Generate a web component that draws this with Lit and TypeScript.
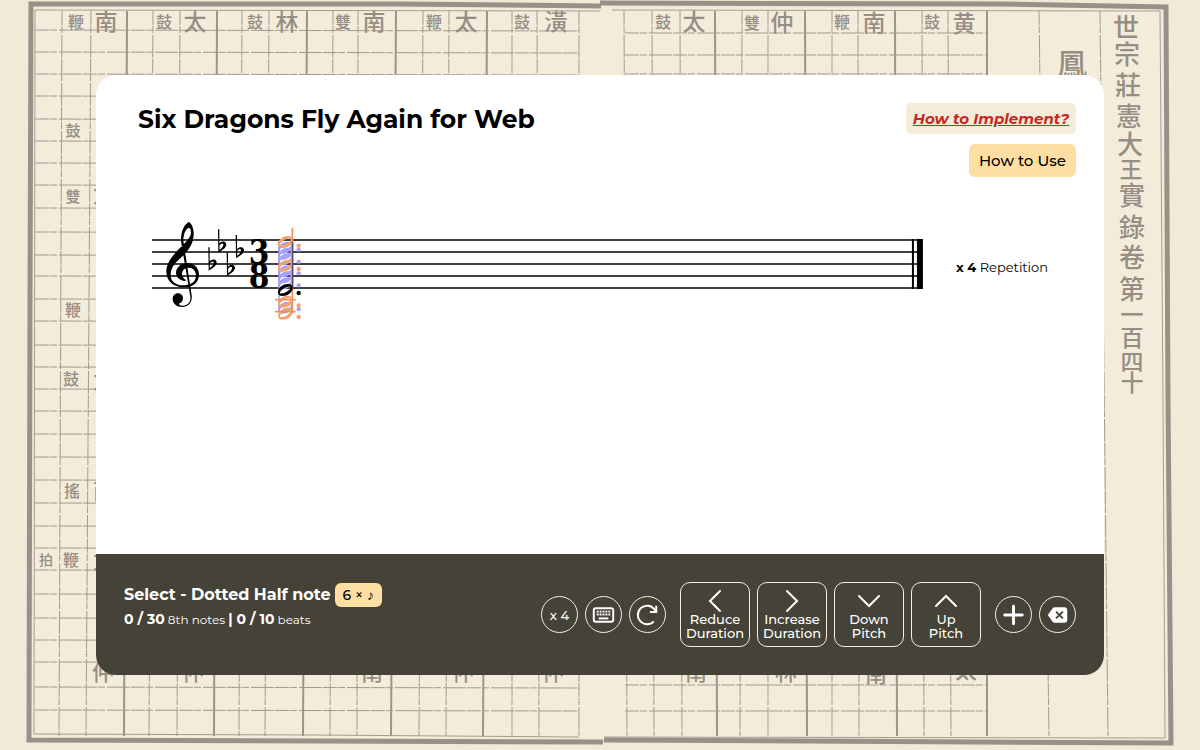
import { LitElement, html, css, svg } from "lit";
import { customElement } from "lit/decorators.js";
import { classMap } from "lit/directives/class-map.js";

// Ruled columns of the manuscript page: [x at the top, x at the bottom, heavy]
const COLUMNS: [number, number, boolean][] = [
  [62, 59, false], [91, 86, false], [127, 124, true], [153, 149, false], [180, 177, false],
  [217, 214, true], [242, 239, false], [269, 265, false], [307, 303, true], [333, 330, false],
  [358, 357, false], [396, 391, true], [423, 419, false], [449, 446, false], [487, 483, true],
  [512, 512, false], [537, 539, false], [579, 579, false], [624, 627, false], [652, 654, false],
  [680, 682, false], [715, 717, true], [742, 740, false], [768, 768, false], [805, 807, true],
  [832, 832, false], [858, 859, false], [895, 897, true], [922, 924, false], [948, 951, false],
  [987, 987, true], [1039, 1049, false], [1100, 1108, false],
];

const LEFT_ROWS = [
  30, 52, 74, 96, 119, 141, 163, 185, 208, 232, 255, 276, 299, 321, 345, 367, 389, 411,
  434, 457, 480, 503, 526, 548, 570, 594, 618, 640, 662, 687, 710,
];
const RIGHT_ROWS = [33, 55, 74, 685, 711];

// Brush characters: [glyph, centre x, baseline y, size]
const GLYPHS: [string, number, number, number][] = [
  ["南", 106, 30, 23], ["太", 195, 30, 23], ["林", 287, 30, 23], ["南", 374, 30, 23],
  ["太", 466, 30, 23], ["潢", 556, 30, 23], ["太", 694, 30, 23], ["仲", 782, 31, 23],
  ["南", 874, 31, 23], ["黄", 964, 32, 23],
  ["鞭", 76, 28, 16], ["鼓", 164, 28, 16], ["鼓", 255, 28, 16], ["雙", 343, 28, 16],
  ["鞭", 434, 28, 16], ["鼓", 522, 28, 16], ["鼓", 663, 28, 16], ["雙", 752, 29, 16],
  ["鞭", 842, 28, 16], ["鼓", 932, 28, 16],
  ["鼓", 73, 136, 15], ["雙", 73, 202, 15], ["鞭", 73, 316, 16], ["鼓", 71, 385, 16],
  ["搖", 72, 497, 16], ["鞭", 71, 566, 16], ["拍", 46, 565, 14],
  ["太", 104, 202, 22], ["太", 104, 388, 22], ["南", 104, 499, 22], ["太", 104, 568, 22],
  ["仲", 103, 680, 22], ["仲", 193, 680, 22], ["南", 372, 680, 22], ["仲", 463, 680, 22],
  ["仲", 553, 680, 22], ["南", 696, 680, 22], ["林", 786, 680, 22], ["南", 876, 682, 22],
  ["太", 966, 678, 22], ["鳳", 1072, 75, 30],
];

// Volume title down the right margin: [glyph, baseline y, size]
const TITLE_COLUMN: [string, number, number][] = [
  ["世", 37, 26], ["宗", 64, 26], ["莊", 95, 26], ["憲", 126, 26], ["大", 154, 26],
  ["王", 178, 23], ["實", 205, 26], ["錄", 237, 26], ["卷", 267, 26], ["第", 299, 26],
  ["一", 323, 23], ["百", 346, 23], ["四", 370, 23], ["十", 391, 23],
];

@customElement("manuscript-page")
class ManuscriptPage extends LitElement {
  static styles = css`
    :host { display: block; }
    svg { display: block; width: 100%; height: 100%; }
    .paper { fill: #f2e9d8; }
    .sheet { fill: #f4ecda; }
    .rule { stroke: #a19a91; stroke-width: 1; stroke-dasharray: 14 1 7 2 23 1; }
    .heavy { stroke: #9b948c; stroke-width: 2; stroke-dasharray: none; }
    .inner { fill: none; stroke: #a39c93; stroke-width: 1; }
    .frame { fill: none; stroke: #989189; stroke-width: 5; }
    text { font-family: "Noto Sans CJK TC", sans-serif; font-weight: 500; fill: #968e85; text-anchor: middle; }
  `;

  render() {
    return html`<svg viewBox="0 0 1200 750" preserveAspectRatio="xMidYMid slice" aria-hidden="true">
      <rect class="paper" x="-600" y="-600" width="2400" height="2000" />
      <rect class="sheet" x="33" y="8" width="1134" height="730" />
      ${COLUMNS.map(([a, b, heavy]) => svg`<line class=${classMap({ rule: true, heavy })} x1=${a} y1="11" x2=${b} y2="736" />`)}
      ${LEFT_ROWS.map((y) => svg`<line class="rule" x1="35" y1=${y} x2="579" y2=${y + 1} />`)}
      ${RIGHT_ROWS.map((y) => svg`<line class="rule" x1="625" y1=${y} x2="987" y2=${y} />`)}
      <path class="inner" d="M600 11 L35 10 L34 734 L315 735 L579 737 M612 10 L1160 11 L1163 400 L1165 738 L604 737" />
      <path class="frame" d="M601 6 L400 4 L31 4 L30 300 L29 740 L603 742" />
      <path class="frame" d="M600 3 L1000 4 L1166 7 L1168 400 L1171 743 L604 740" />
      ${GLYPHS.map(([g, x, y, s]) => svg`<text x=${x} y=${y} font-size=${s}>${g}</text>`)}
      ${TITLE_COLUMN.map(([g, y, s], i) => svg`<text x=${1126 + Math.min(i, 6)} y=${y} font-size=${s}>${g}</text>`)}
    </svg>`;
  }
}

// Vertical centres of the ghost candidates around the chosen pitch
const ORANGE_HEADS = [96, 167, 275, 311];
const PURPLE_HEADS = [113, 131, 148, 184, 202, 220, 293];
const ORANGE_DOTS = [107, 177, 286, 321];
const PURPLE_DOTS = [119, 155, 190, 226, 297];
const FLATS: [number, number][] = [[208, 112], [237, 58], [263, 128], [290, 75]];

const halfHead = (y: number) => svg`
  <path transform="translate(436 ${y})" fill-rule="evenodd"
    d="M-22 6 C-22 -8 -6 -18 8 -18 C18 -18 22 -13 22 -6 C22 8 6 18 -8 18 C-18 18 -22 13 -22 6 Z
      M-16 9 C-14 13 -3 10 6 4 C14 -1 18 -6 16 -9 C13 -13 3 -10 -6 -4 C-13 1 -18 6 -16 9 Z" />`;

@customElement("staff-score")
class StaffScore extends LitElement {
  static styles = css`
    :host { display: block; }
    svg { display: block; width: 100%; height: 120px; overflow: visible; }
    .line { stroke: #000; stroke-width: 1.6; }
    .thin { stroke: #000; stroke-width: 2; }
    .meter { font: 700 33px "DejaVu Serif Condensed", "DejaVu Serif", serif; text-anchor: middle; }
    .orange { fill: #f5a16c; }
    .orange-line { stroke: #f0905e; stroke-width: 5; }
    .purple { fill: #a5a1f6; }
    .purple-line { stroke: #9a8ae8; stroke-width: 4; }
    .stem { stroke: #5b3b73; stroke-width: 4; }
  `;

  render() {
    return html`<svg role="img" aria-label="Staff in A-flat major, three-eight time">
      ${[30, 42, 54, 66, 78].map((y) => svg`<line class="line" x1="0" x2="100%" y1=${y} y2=${y} />`)}
      <g transform="translate(-12 0) scale(0.33333)">
        <path d="M147 35 C158 44 162 60 161 76 C159 106 143 124 125 141 C108 157 92 170 92 195 C92 215 108 226 130 226
          C146 226 168 220 168 196 C168 182 158 173 146 173 C134 173 126 181 126 191 C126 200 131 206 138 210
          C137 213 136 214 134 213 C120 211 108 202 108 189 C108 171 124 159 143 159 C162 159 177 174 177 194
          C177 218 158 232 132 232 C102 232 79 214 79 185 C79 158 98 137 116 118 C132 101 153 84 153 68
          C153 60 150 54 147 54 C138 54 130 72 130 92 L155 256 C158 278 144 291 127 291 C110 291 98 281 98 267
          C98 257 105 250 114 250 C123 250 129 257 129 265 C129 274 123 280 116 281 C119 286 124 287 129 287
          C143 287 153 276 151 260 L124 100 C120 70 130 45 147 35 Z" />
        ${FLATS.map(([x, y]) => svg`<path transform="translate(${x} ${y})" fill-rule="evenodd"
          d="M-3 0 H1 V42 C6 37 13 35 18 38 C25 43 22 53 14 59 L-2 70 Z M1.5 48 V62 C9 57 14 50 13 45 C12 40 6 42 1.5 48 Z" />`)}
        <line class="purple-line" x1="417" x2="417" y1="92" y2="300" />
        <g class="purple">
          ${PURPLE_HEADS.map(halfHead)}
          ${PURPLE_DOTS.map((y) => svg`<circle cx="476" cy=${y} r="6.5" />`)}
        </g>
        <g class="orange">
          ${ORANGE_HEADS.map(halfHead)}
          ${ORANGE_DOTS.map((y) => svg`<circle cx="476" cy=${y} r="6.5" />`)}
        </g>
        <line class="orange-line" x1="405" x2="467" y1="269" y2="269" />
        <line class="orange-line" x1="405" x2="467" y1="305" y2="305" />
        <line class="orange-line" x1="457" x2="457" y1="53" y2="310" />
        <line class="stem" x1="458" x2="458" y1="96" y2="236" />
        ${halfHead(240)}
        <circle cx="476" cy="249" r="6.5" />
      </g>
      <text class="meter" x="107" y="54">3</text>
      <text class="meter" x="107" y="78">8</text>
      <svg x="100%" y="0" width="1" height="120" overflow="visible">
        <line class="thin" x1="-10" x2="-10" y1="29" y2="79" />
        <rect x="-6" y="29" width="6" height="50" />
      </svg>
    </svg>`;
  }
}

const ICONS = {
  keyboard: svg`<rect x="8" y="11" width="20" height="14" rx="2" fill="none" stroke="currentColor" stroke-width="2" />
    <path d="M11 14.5h14M11 17.5h14" stroke="currentColor" stroke-width="2" stroke-dasharray="2 1" />
    <path d="M13 21.500h10" stroke="currentColor" stroke-width="2" />`,
  refresh: svg`<path d="M24.500 24.500 A9.500 9.500 0 1 1 25 12 L27 14.500" fill="none" stroke="currentColor" stroke-width="2" />
    <path d="M27 8.500V15H20.500" fill="none" stroke="currentColor" stroke-width="2" />`,
  plus: svg`<path d="M18 9v18M9 18h18" stroke="currentColor" stroke-width="3" stroke-linecap="round" />`,
  erase: svg`<path d="M8 18l5-7q1-1 2-1h10q3 0 3 3v10q0 3-3 3H15q-1 0-2-1z" fill="currentColor" />
    <path d="M16.500 14.500l7 7m0-7l-7 7" stroke="#454237" stroke-width="2" />`,
};

const ARROWS = {
  left: "M15 1 L5 11 L15 21",
  right: "M5 1 L15 11 L5 21",
  down: "M0 6 L10 16 L20 6",
  up: "M0 16 L10 6 L20 16",
};

@customElement("app-root")
class AppRoot extends LitElement {
  static styles = css`
    :host {
      display: grid;
      min-height: 100vh;
      font-family: Montserrat, Inter, sans-serif;
      color: #000;
    }
    *, *::before { box-sizing: border-box; }
    manuscript-page, .stage { grid-area: 1 / 1; min-width: 0; }
    manuscript-page { height: 100vh; }
    .stage { position: relative; display: grid; padding: 10vh 8vw; min-height: 100vh; }
    .card { display: flex; flex-direction: column; background: #fff; border-radius: 20px; overflow: hidden; min-width: 0; }
    header { display: flex; justify-content: space-between; align-items: flex-start; padding: 28px 28px 0 42px; }
    h1 { margin: 0; font-size: 25px; line-height: 32px; font-weight: 700; }
    nav { display: flex; flex-direction: column; align-items: flex-end; gap: 10px; }
    .implement { padding: 0 7px; line-height: 31px; border-radius: 5px; background: #f4ecda; color: #c8281e;
      font-size: 15px; font-weight: 700; font-style: italic; }
    .use { height: 33px; padding: 0 10px; border: 0; border-radius: 6px; background: #ffdea1; color: #000;
      font: 500 15px/20px Montserrat, Inter, sans-serif; }
    .score { flex: 1; display: flex; align-items: flex-start; gap: 33px; padding: 33px 56px 0; }
    staff-score { flex: 1; min-width: 0; }
    .repeat { margin: 0; padding-top: 48px; font-size: 13px; line-height: 18px; }
    footer { display: flex; justify-content: space-between; align-items: center; min-height: 121px; padding: 0 28px;
      background: #454237; color: #fff; }
    .status { display: flex; flex-direction: column; padding-bottom: 14px; }
    .status p { margin: 0; }
    .choice { display: flex; align-items: center; gap: 4px; font-size: 16px; font-weight: 700; line-height: 24px; }
    .length { padding: 0 8px; border-radius: 6px; background: #ffdea1; color: #000; font-size: 14px; font-weight: 500; }
    .counts { font-size: 12px; line-height: 24px; }
    .counts b { font-size: 14px; font-weight: 700; }
    .tools, .group { display: flex; align-items: center; }
    .tools { gap: 14px; }
    .group { gap: 7px; }
    .group button { border: 1px solid #f1eee4; background: none; color: #fff; padding: 0; flex: none;
      display: flex; align-items: center; justify-content: center; font: 500 13px/14px Montserrat, Inter, sans-serif; }
    .group .round { width: 37px; height: 37px; border-radius: 50%; }
    .round svg { width: 36px; height: 36px; }
    .group .move { width: 70px; height: 65px; border-radius: 10px; flex-direction: column; gap: 0; }
    .move svg { width: 20px; height: 22px; overflow: visible; fill: none; stroke: currentColor; stroke-width: 2; stroke-linecap: round; }
  `;

  private round(label: string, icon: unknown) {
    return html`<button class="round" aria-label=${label}><svg viewBox="0 0 36 36">${icon}</svg></button>`;
  }

  private move(arrow: keyof typeof ARROWS, first: string, second: string) {
    return html`<button class="move">
      <svg viewBox="0 0 20 22" aria-hidden="true"><path d=${ARROWS[arrow]} /></svg>
      <span>${first}<br />${second}</span>
    </button>`;
  }

  render() {
    return html`
      <manuscript-page></manuscript-page>
      <div class="stage">
        <main class="card">
          <header>
            <h1>Six Dragons Fly Again for Web</h1>
            <nav>
              <a class="implement" href="#implement">How to Implement?</a>
              <button class="use">How to Use</button>
            </nav>
          </header>
          <section class="score">
            <staff-score></staff-score>
            <p class="repeat"><b>x 4</b> Repetition</p>
          </section>
          <footer>
            <div class="status">
              <p class="choice">Select - Dotted Half note <span class="length">6 × ♪</span></p>
              <p class="counts"><b>0 / 30</b> 8th notes <b>| 0 / 10</b> beats</p>
            </div>
            <div class="tools">
              <div class="group">
                <button class="round">x 4</button>
                ${this.round("Keyboard", ICONS.keyboard)}
                ${this.round("Restart", ICONS.refresh)}
              </div>
              <div class="group">
                ${this.move("left", "Reduce", "Duration")}
                ${this.move("right", "Increase", "Duration")}
                ${this.move("down", "Down", "Pitch")}
                ${this.move("up", "Up", "Pitch")}
              </div>
              <div class="group">
                ${this.round("Add", ICONS.plus)}
                ${this.round("Delete", ICONS.erase)}
              </div>
            </div>
          </footer>
        </main>
      </div>`;
  }
}
